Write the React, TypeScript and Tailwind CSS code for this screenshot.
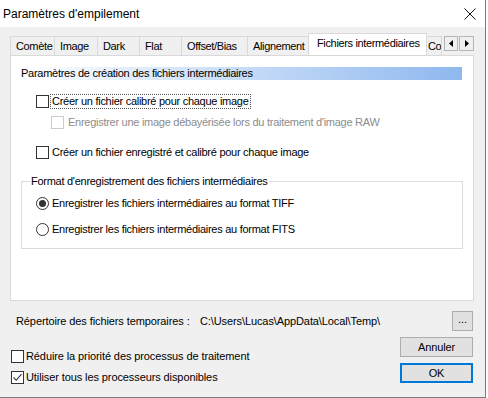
import React from "react";

const FONT = "font-['Liberation_Sans',Arial,sans-serif]";

const TABS = [
  { label: "Comète", w: "w-[44px]" },
  { label: "Image", w: "w-[43px]" },
  { label: "Dark", w: "w-[42px]" },
  { label: "Flat", w: "w-[42px]" },
  { label: "Offset/Bias", w: "w-[66px]" },
  { label: "Alignement", w: "w-[63px]" },
];

function CheckBox({ checked = false, disabled = false }: { checked?: boolean; disabled?: boolean }) {
  return (
    <span
      className={`w-[13px] h-[13px] shrink-0 border bg-white flex items-center justify-center ${
        disabled ? "border-[#cccccc]" : "border-[#333333]"
      }`}
    >
      {checked && (
        <svg width="11" height="11" viewBox="0 0 11 11">
          <path d="M1.5 5.5 L4.2 8.3 L9.5 2.2" fill="none" stroke="#333333" strokeWidth="1.1" />
        </svg>
      )}
    </span>
  );
}

function Radio({ checked = false }: { checked?: boolean }) {
  return (
    <span className="w-[13px] h-[13px] shrink-0 rounded-full border border-[#333333] bg-white flex items-center justify-center">
      {checked && <span className="w-[7px] h-[7px] rounded-full bg-[#333333]" />}
    </span>
  );
}

export default function App() {
  return (
    <div className={`w-[488px] h-[398px] bg-white overflow-hidden ${FONT} text-black`}>
      <div className="w-[486px] h-[398px] bg-[#f0f0f0] border-r border-b border-[#7a7a7a] flex flex-col">
        {/* Title bar */}
        <div className="h-[27px] bg-white flex items-center justify-between pl-[3px] pr-[9px] shrink-0">
          <span className="text-[12px] leading-none">Paramètres d'empilement</span>
          <svg width="12" height="12" viewBox="0 0 12 12">
            <path d="M0.5 0.5 L11.5 11.5 M11.5 0.5 L0.5 11.5" stroke="#111111" strokeWidth="1" />
          </svg>
        </div>

        {/* Tab strip */}
        <div className="mt-[6px] ml-[10px] w-[464px] h-[22px] flex items-end relative">
          {TABS.map((t) => (
            <div
              key={t.label}
              className={`${t.w} h-[19px] border-l border-t border-[#d9d9d9] bg-[#f0f0f0] pl-[5px] flex items-center text-[11px] tracking-[-0.35px] leading-none`}
            >
              {t.label}
            </div>
          ))}
          <div className="w-[119px] h-[22px] -mx-[2px] border border-b-0 border-[#d9d9d9] bg-white pl-[8px] pb-[2px] flex items-center text-[11px] tracking-[-0.35px] leading-none relative z-10">
            Fichiers intermédiaires
          </div>
          <div className="w-[17px] h-[19px] border-t border-r border-[#d9d9d9] bg-[#f0f0f0] pl-[3px] flex items-center text-[11px] tracking-[-0.35px] leading-none overflow-hidden whitespace-nowrap">
            Co
          </div>
          <div className="flex self-start mt-[3px] ml-[2px] gap-[1px]">
            <div className="w-[14px] h-[15px] border border-[#b5b5b5] bg-[#f0f0f0] flex items-center justify-center">
              <svg width="4" height="7" viewBox="0 0 4 7">
                <path d="M4 0 L0 3.5 L4 7 Z" fill="#000" />
              </svg>
            </div>
            <div className="w-[15px] h-[15px] border border-[#b5b5b5] bg-[#f0f0f0] flex items-center justify-center">
              <svg width="4" height="7" viewBox="0 0 4 7">
                <path d="M0 0 L4 3.5 L0 7 Z" fill="#000" />
              </svg>
            </div>
          </div>
        </div>

        {/* Tab panel */}
        <div className="ml-[10px] w-[464px] h-[246px] bg-white border border-[#d9d9d9] text-[11px] tracking-[-0.27px] leading-none shrink-0">
          <div className="mt-[11px] ml-[8px] w-[443px] h-[13px] bg-gradient-to-r from-[#ffffff] to-[#8fb8ee] flex items-center pl-[2px]">
            Paramètres de création des fichiers intermédiaires
          </div>

          <div className="mt-[14px] ml-[25px] flex items-center">
            <CheckBox />
            <span className="ml-[1px] px-[1px] py-[1px] border border-dotted border-[#555555]">
              Créer un fichier calibré pour chaque image
            </span>
          </div>
          <div className="mt-[7px] ml-[40px] flex items-center">
            <CheckBox disabled />
            <span className="ml-[4px] text-[#8d8d8d]">
              Enregistrer une image débayérisée lors du traitement d'image RAW
            </span>
          </div>
          <div className="mt-[17px] ml-[25px] flex items-center">
            <CheckBox />
            <span className="ml-[3px]">Créer un fichier enregistré et calibré pour chaque image</span>
          </div>

          {/* Group box */}
          <div className="mt-[22px] ml-[10px] w-[442px] h-[68px] border border-[#dcdcdc] relative">
            <span className="absolute -top-[6px] left-[8px] bg-white px-[1px]">
              Format d'enregistrement des fichiers intermédiaires
            </span>
            <div className="mt-[15px] ml-[14px] flex items-center">
              <Radio checked />
              <span className="ml-[3px]">Enregistrer les fichiers intermédiaires au format TIFF</span>
            </div>
            <div className="mt-[13px] ml-[14px] flex items-center">
              <Radio />
              <span className="ml-[3px]">Enregistrer les fichiers intermédiaires au format FITS</span>
            </div>
          </div>
        </div>

        {/* Temp directory row */}
        <div className="mt-[10px] flex items-center h-[20px] pl-[16px] pr-[12px] text-[11px] tracking-[-0.1px] leading-none">
          <span className="w-[184px]">Répertoire des fichiers temporaires :</span>
          <span className="flex-1">C:\Users\Lucas\AppData\Local\Temp\</span>
          <div className="w-[21px] h-[20px] border border-[#adadad] bg-[#e1e1e1] flex items-center justify-center pb-[3px]">
            ...
          </div>
        </div>

        {/* Bottom row */}
        <div className="mt-[6px] flex pl-[11px] pr-[12px] text-[11px] tracking-[-0.1px] leading-none">
          <div className="flex-1 pt-[13px] flex flex-col gap-[8px]">
            <div className="flex items-center">
              <CheckBox />
              <span className="ml-[2px]">Réduire la priorité des processus de traitement</span>
            </div>
            <div className="flex items-center">
              <CheckBox checked />
              <span className="ml-[2px]">Utiliser tous les processeurs disponibles</span>
            </div>
          </div>
          <div className="flex flex-col gap-[6px]">
            <div className="w-[73px] h-[20px] border border-[#adadad] bg-[#e1e1e1] flex items-center justify-center">
              Annuler
            </div>
            <div className="w-[73px] h-[20px] border-2 border-[#0078d7] bg-[#e1e1e1] flex items-center justify-center">
              OK
            </div>
          </div>
        </div>
      </div>
    </div>
  );
}
